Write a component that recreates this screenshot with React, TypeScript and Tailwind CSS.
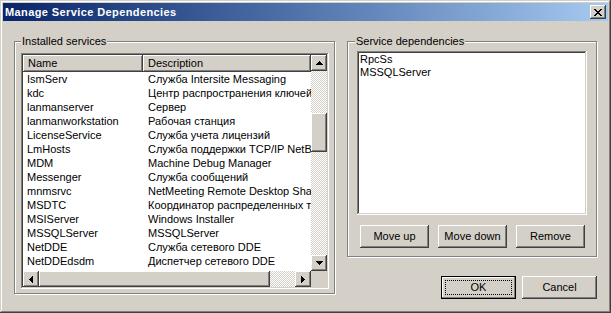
import React from 'react';

const raised =
  'shadow-[inset_-1px_-1px_#404040,inset_1px_1px_#fff,inset_-2px_-2px_#808080,inset_2px_2px_#d4d0c8]';
const sunken =
  'shadow-[inset_-1px_-1px_#fff,inset_1px_1px_#808080,inset_-2px_-2px_#d4d0c8,inset_2px_2px_#404040]';
const etched = 'border border-[#808080] shadow-[1px_1px_0_#fff,inset_1px_1px_0_#fff]';
const dither =
  'bg-[image:repeating-conic-gradient(#fff_0_25%,#d4d0c8_0_50%)] bg-[length:2px_2px]';

const services: [string, string][] = [
  ['IsmServ', 'Служба Intersite Messaging'],
  ['kdc', 'Центр распространения ключей Kerberos'],
  ['lanmanserver', 'Сервер'],
  ['lanmanworkstation', 'Рабочая станция'],
  ['LicenseService', 'Служба учета лицензий'],
  ['LmHosts', 'Служба поддержки TCP/IP NetBIOS'],
  ['MDM', 'Machine Debug Manager'],
  ['Messenger', 'Служба сообщений'],
  ['mnmsrvc', 'NetMeeting Remote Desktop Sharing'],
  ['MSDTC', 'Координатор распределенных транзакций'],
  ['MSIServer', 'Windows Installer'],
  ['MSSQLServer', 'MSSQLServer'],
  ['NetDDE', 'Служба сетевого DDE'],
  ['NetDDEdsdm', 'Диспетчер сетевого DDE'],
  ['Netlogon', 'Сетевой вход в систему'],
];

type Dir = 'up' | 'down' | 'left' | 'right';

const Arrow = ({ dir }: { dir: Dir }) => {
  const v = dir === 'up' || dir === 'down';
  const rows = dir === 'up' || dir === 'left' ? [1, 3, 5, 7] : [7, 5, 3, 1];
  return (
    <svg width={v ? 7 : 4} height={v ? 4 : 7} shapeRendering="crispEdges">
      {rows.map((len, i) => {
        const off = (7 - len) / 2;
        return v ? (
          <rect key={i} x={off} y={i} width={len} height={1} fill="#000" />
        ) : (
          <rect key={i} x={i} y={off} width={1} height={len} fill="#000" />
        );
      })}
    </svg>
  );
};

const ScrollBtn = ({ dir }: { dir: Dir }) => (
  <div className={`w-4 h-4 shrink-0 bg-[#d4d0c8] flex items-center justify-center ${raised}`}>
    <Arrow dir={dir} />
  </div>
);

const Button = ({ label, width }: { label: string; width: string }) => (
  <div className={`${width} h-[23px] flex items-center justify-center bg-[#d4d0c8] ${raised}`}>
    <span className="leading-[13px]">{label}</span>
  </div>
);

const DefaultButton = ({ label }: { label: string }) => (
  <div className="relative w-[75px] h-[23px] flex items-center justify-center bg-[#d4d0c8] border border-black shadow-[inset_-1px_-1px_#808080,inset_1px_1px_#fff]">
    <div className="absolute left-[3px] top-[3px] right-[3px] bottom-[3px] border border-dotted border-black" />
    <span className="leading-[13px]">{label}</span>
  </div>
);

export default function App() {
  return (
    <div
      className="w-[611px] h-[313px] bg-[#d4d0c8] p-[3px] shadow-[inset_-1px_-1px_#404040,inset_1px_1px_#d4d0c8,inset_-2px_-2px_#808080,inset_2px_2px_#fff] text-[11px] text-black overflow-hidden"
      style={{ fontFamily: '"Liberation Sans", Arial, sans-serif' }}
    >
      {/* title bar */}
      <div className="h-[18px] bg-linear-to-r from-[#0a246a] to-[#a6caf0] flex items-center justify-between">
        <span className="pl-[2px] font-bold text-white leading-[13px] tracking-[0.4px]">Manage Service Dependencies</span>
        <div className={`w-4 h-[14px] mr-[2px] bg-[#d4d0c8] flex items-center justify-center ${raised}`}>
          <svg width="8" height="7" shapeRendering="crispEdges">
            <path
              d="M0 0h2v1h-2zM6 0h2v1h-2zM1 1h2v1h-2zM5 1h2v1h-2zM2 2h4v1h-4zM3 3h2v1h-2zM2 4h4v1h-4zM1 5h2v1h-2zM5 5h2v1h-2zM0 6h2v1h-2zM6 6h2v1h-2z"
              fill="#000"
            />
          </svg>
        </div>
      </div>

      <div className="flex pt-[20px] pl-[11px]">
        {/* Installed services */}
        <div className={`relative w-[321px] h-[253px] pl-[6px] pt-[11px] ${etched}`}>
          <span className="absolute left-[6px] top-[-7px] px-[1px] bg-[#d4d0c8] leading-[13px]">Installed services</span>
          <div className={`w-[308px] h-[236px] bg-white p-[2px] ${sunken}`}>
            <div className="flex h-[216px]">
              <div className="w-[288px] overflow-hidden">
                <div className="flex h-[17px]">
                  <div className={`w-[120px] shrink-0 bg-[#d4d0c8] pl-[5px] flex items-center ${raised}`}>Name</div>
                  <div className={`flex-1 bg-[#d4d0c8] pl-[5px] flex items-center ${raised}`}>Description</div>
                </div>
                {services.map(([name, desc]) => (
                  <div key={name} className="flex h-[14px] items-center whitespace-nowrap leading-[13px]">
                    <div className="w-[120px] shrink-0 pl-[4px] overflow-hidden">{name}</div>
                    <div className="pl-[5px]">{desc}</div>
                  </div>
                ))}
              </div>
              <div className="w-4 flex flex-col">
                <ScrollBtn dir="up" />
                <div className={`h-[42px] ${dither}`} />
                <div className={`h-[39px] bg-[#d4d0c8] ${raised}`} />
                <div className={`flex-1 ${dither}`} />
                <ScrollBtn dir="down" />
              </div>
            </div>
            <div className="flex h-4">
              <ScrollBtn dir="left" />
              <div className={`w-[231px] bg-[#d4d0c8] ${raised}`} />
              <div className={`w-[25px] ${dither}`} />
              <ScrollBtn dir="right" />
              <div className="w-4 bg-[#d4d0c8]" />
            </div>
          </div>
        </div>

        {/* Service dependencies */}
        <div className="ml-[12px] flex flex-col">
          <div className={`relative w-[250px] h-[216px] pl-[9px] pt-[9px] ${etched}`}>
            <span className="absolute left-[7px] top-[-7px] px-[1px] bg-[#d4d0c8] leading-[13px]">Service dependencies</span>
            <div className={`w-[230px] h-[164px] bg-white p-[2px] pl-[3px] ${sunken}`}>
              <div className="leading-[13px]">RpcSs</div>
              <div className="leading-[13px]">MSSQLServer</div>
            </div>
            <div className="flex gap-[9px] mt-[10px] ml-[3px]">
              <Button label="Move up" width="w-[69px]" />
              <Button label="Move down" width="w-[69px]" />
              <Button label="Remove" width="w-[69px]" />
            </div>
          </div>
          <div className="flex justify-end gap-[6px] mt-[19px]">
            <DefaultButton label="OK" />
            <Button label="Cancel" width="w-[75px]" />
          </div>
        </div>
      </div>
    </div>
  );
}
